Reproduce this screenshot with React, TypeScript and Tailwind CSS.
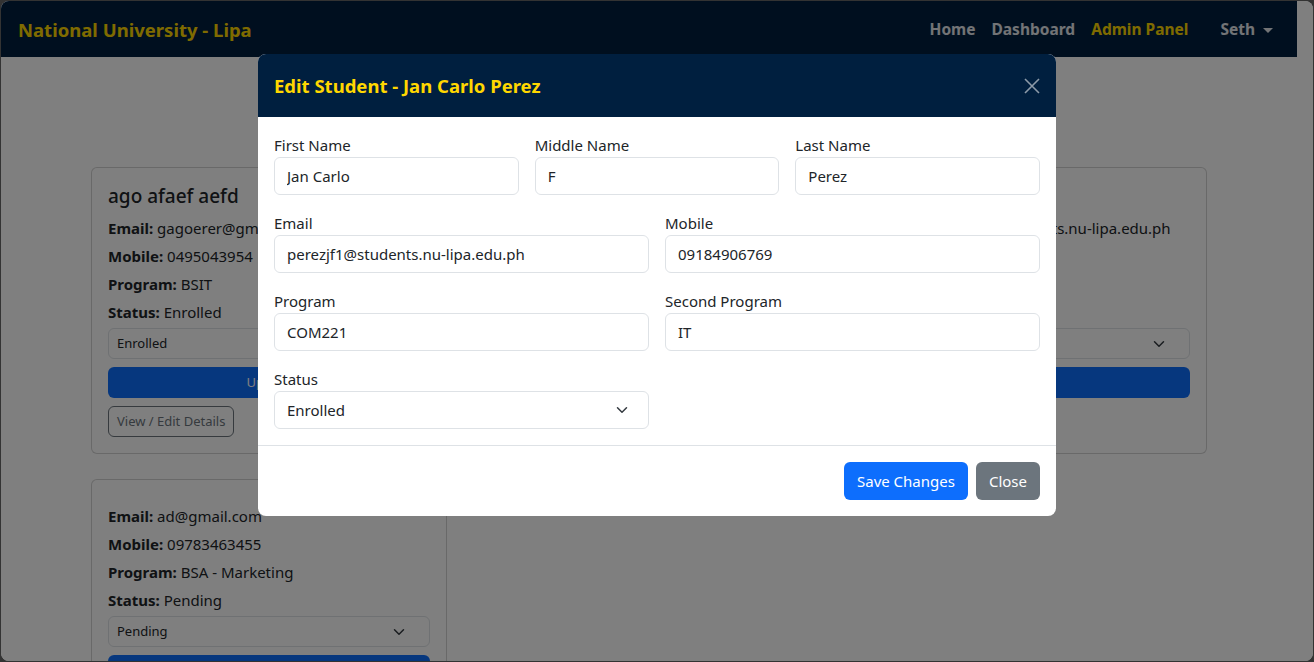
import React from 'react';

type Student = {
  name: string;
  email: string;
  mobile: string;
  program: string;
  status: string;
  details?: boolean;
};

const students: Student[] = [
  { name: 'ago afaef aefd', email: 'gagoerer@gmail.com', mobile: '0495043954', program: 'BSIT', status: 'Enrolled', details: true },
  { name: 'Maria Santos', email: 'santosm2@students.nu-lipa.edu.ph', mobile: '09171234567', program: 'BSCS', status: 'Enrolled', details: true },
  { name: 'Jan Carlo F Perez', email: 'perezjcf01@students.nu-lipa.edu.ph', mobile: '09184906769', program: 'COM221', status: 'Enrolled', details: true },
  { name: '', email: 'ad@gmail.com', mobile: '09783463455', program: 'BSA - Marketing', status: 'Pending' },
];

const Chevron = ({ className = '' }: { className?: string }) => (
  <svg viewBox="0 0 16 16" className={className} fill="none" stroke="#343a40" strokeWidth="2" strokeLinecap="round" strokeLinejoin="round">
    <path d="m2 5 6 6 6-6" />
  </svg>
);

const StudentCard = ({ s }: { s: Student }) => (
  <div className="rounded-md border border-black/[.175] bg-white p-4 text-[#212529]">
    <h5 className="mb-2 text-[19px] font-medium leading-6">{s.name}</h5>
    <p className="mb-1 leading-6"><b>Email:</b> {s.email}</p>
    <p className="mb-1 leading-6"><b>Mobile:</b> {s.mobile}</p>
    <p className="mb-1 leading-6"><b>Program:</b> {s.program}</p>
    <p className="mb-1 leading-6"><b>Status:</b> {s.status}</p>
    <div className="flex h-[31px] items-center justify-between rounded-md border border-[#dee2e6] pl-2 pr-[22px] text-[13px]">
      {s.status}
      <Chevron className="h-3 w-4" />
    </div>
    <button className="mt-2 h-[31px] w-full rounded-md bg-[#0d6efd] text-[13px] text-white">Update</button>
    {s.details && (
      <button className="mt-2 h-[31px] rounded-md border border-[#6c757d] px-2 text-[13px] text-[#6c757d]">View / Edit Details</button>
    )}
  </div>
);

const Field = ({ label, value }: { label: string; value: string }) => (
  <div>
    <label className="block leading-6">{label}</label>
    <input
      readOnly
      defaultValue={value}
      className="h-[38px] w-full rounded-md border border-[#dee2e6] px-3 text-[#212529] outline-none"
    />
  </div>
);

export default function App() {
  return (
    <div className="h-[662px] w-[1314px] bg-[#333] p-px font-['Noto_Sans',sans-serif] text-[15px]">
      <div className="relative h-full overflow-hidden rounded-lg bg-white">
        <div className="pr-4">
          <nav className="flex h-14 items-center justify-between bg-[#001f3f] pl-[17px] pr-4 pt-[2px]">
            <span className="text-[18.5px] font-bold text-[#ffd700]">National University - Lipa</span>
            <div className="flex items-center text-[15.5px] font-bold text-white/90">
              <span className="px-2">Home</span>
              <span className="px-2">Dashboard</span>
              <span className="px-2 text-[#ffd700]">Admin Panel</span>
              <span className="ml-4 flex items-center gap-2 px-2">
                Seth
                <span className="border-x-[5px] border-t-[5px] border-x-transparent border-t-white/90" />
              </span>
            </div>
          </nav>

          <main className="mx-auto w-[1116px] pt-[110px]">
            <div className="grid grid-cols-3 items-start gap-x-6 gap-y-[25px]">
              {students.map((s, i) => (
                <StudentCard key={i} s={s} />
              ))}
            </div>
          </main>
        </div>

        <div className="absolute inset-0 bg-black/50" />

        <div className="absolute left-[257px] top-[53px] w-[798px] overflow-hidden rounded-lg bg-white text-[#212529]">
          <div className="flex h-[63px] items-center justify-between bg-[#001f3f] px-4">
            <h5 className="text-[18.5px] font-bold text-[#ffd700]">Edit Student - Jan Carlo Perez</h5>
            <svg viewBox="0 0 16 16" className="h-4 w-4" stroke="#ffffff" strokeOpacity="0.55" strokeWidth="1.6">
              <path d="M1 1l14 14M15 1 1 15" />
            </svg>
          </div>

          <div className="p-4">
            <div className="mb-4 grid grid-cols-3 gap-4">
              <Field label="First Name" value="Jan Carlo" />
              <Field label="Middle Name" value="F" />
              <Field label="Last Name" value="Perez" />
            </div>
            <div className="mb-4 grid grid-cols-2 gap-4">
              <Field label="Email" value="perezjf1@students.nu-lipa.edu.ph" />
              <Field label="Mobile" value="09184906769" />
            </div>
            <div className="mb-4 grid grid-cols-2 gap-4">
              <Field label="Program" value="COM221" />
              <Field label="Second Program" value="IT" />
            </div>
            <div className="grid grid-cols-2 gap-4">
              <div>
                <label className="block leading-6">Status</label>
                <div className="flex h-[38px] items-center justify-between rounded-md border border-[#dee2e6] pl-3 pr-[18px]">
                  Enrolled
                  <Chevron className="h-3 w-4" />
                </div>
              </div>
            </div>
          </div>

          <div className="flex justify-end gap-2 border-t border-[#dee2e6] p-4">
            <button className="h-[38px] rounded-md bg-[#0d6efd] px-[13px] text-white">Save Changes</button>
            <button className="h-[38px] rounded-md bg-[#6c757d] px-[13px] text-white">Close</button>
          </div>
        </div>
      </div>
    </div>
  );
}
